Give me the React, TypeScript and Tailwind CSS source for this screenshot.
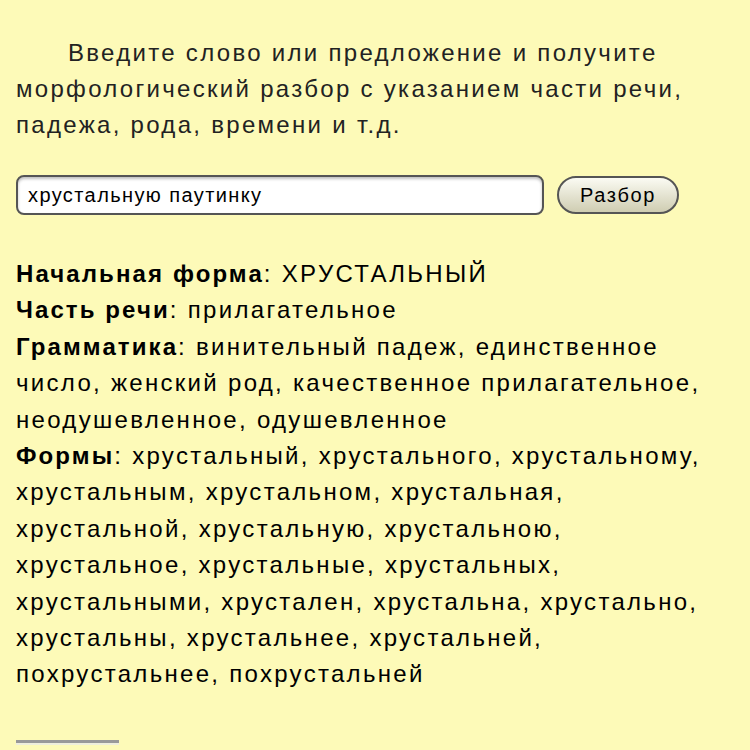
import React from "react";

export default function App() {
  return (
    <div className="min-h-[750px] w-[750px] overflow-hidden bg-[#fdfab8] px-4 text-black" style={{ fontFamily: '"Liberation Sans", Arial, sans-serif' }}>
      <p className="pt-[35px] indent-[52px] text-[24px] leading-[36px] tracking-[2.3px] text-[#222]">
        Введите слово или предложение и получите морфологический разбор с указанием части речи, падежа, рода, времени и т.д.
      </p>
      <div className="mt-[32px] flex items-center gap-[13px]">
        <div className="flex h-[40px] w-[528px] items-center rounded-[8px] border-2 border-[#555] bg-white px-[10px] text-[20px] tracking-[1.4px] shadow-[inset_0_2px_3px_rgba(0,0,0,0.25)]">
          хрустальную паутинку
        </div>
        <button className="flex h-[38px] w-[122px] items-center justify-center rounded-full border-2 border-[#555] bg-gradient-to-b from-[#fbfbf3] to-[#cfcdb2] text-[20px] tracking-[1.6px] text-black">
          Разбор
        </button>
      </div>
      <div className="mt-[41px] text-[24px] leading-[36.4px] tracking-[2.3px]">
        <p>
          <b className="tracking-[2.1px]">Начальная форма</b>: ХРУСТАЛЬНЫЙ
        </p>
        <p>
          <b className="tracking-[2.1px]">Часть речи</b>: прилагательное
        </p>
        <p>
          <b className="tracking-[2.1px]">Грамматика</b>: винительный падеж, единственное число, женский род, качественное прилагательное, неодушевленное, одушевленное
        </p>
        <p>
          <b className="tracking-[2.1px]">Формы</b>: хрустальный, хрустального, хрустальному, хрустальным, хрустальном, хрустальная, хрустальной, хрустальную, хрустальною, хрустальное, хрустальные, хрустальных, хрустальными, хрустален, хрустальна, хрустально, хрустальны, хрустальнее, хрустальней, похрустальнее, похрустальней
        </p>
      </div>
      <div className="mt-[47px] h-[5px] w-[103px] border-t-[3px] border-[#999] bg-[#eeeedd]" />
    </div>
  );
}
